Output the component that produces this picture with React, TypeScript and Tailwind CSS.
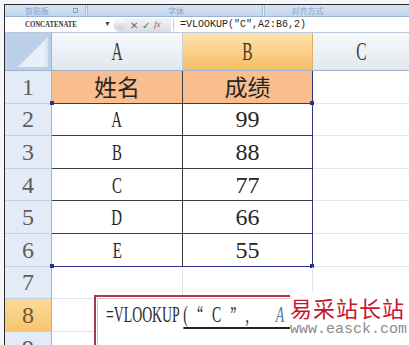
import React from "react";

const serif = "font-['Liberation_Serif',serif]";

// SimSun-style half width latin letters
function Narrow({ children, scale = "scale-x-[0.62]" }: { children: React.ReactNode; scale?: string }) {
  return <span className={`inline-block ${scale}`}>{children}</span>;
}

type Row = { n: number; a?: string; b?: string; head?: boolean; latin?: boolean };

const rows: Row[] = [
  { n: 1, a: "姓名", b: "成绩", head: true },
  { n: 2, a: "A", b: "99", latin: true },
  { n: 3, a: "B", b: "88", latin: true },
  { n: 4, a: "C", b: "77", latin: true },
  { n: 5, a: "D", b: "66", latin: true },
  { n: 6, a: "E", b: "55", latin: true },
  { n: 7 },
  { n: 8 },
  { n: 9 },
];

function Dot({ side }: { side: "left" | "right" }) {
  return (
    <span
      className={`absolute bottom-[-2px] h-[4px] w-[4px] bg-[#2b2f8f] ${side === "left" ? "left-[-2px]" : "right-[-2px]"}`}
    />
  );
}

function SheetRow({ row }: { row: Row }) {
  const inRange = row.n <= 6;
  const bottom =
    row.n === 1 || row.n === 6
      ? "border-b-[#2f3391]"
      : inRange
      ? "border-b-[#3c3c3c]"
      : "border-b-[#dfe3ea]";
  const active = row.n === 8;
  return (
    <div className="flex h-[32.6px] shrink-0">
      <div
        className={`flex w-[47px] shrink-0 items-center justify-center border-b border-r border-b-[#c3d0e0] border-r-[#9fb3cc] font-['Liberation_Serif',serif] text-[24px] text-[#5d5d5d] ${
          active ? "bg-gradient-to-b from-[#fcd99a] to-[#f7c46c] text-[#6a5a3a]" : "bg-[#e3ebf6]"
        }`}
      >
        {row.n}
      </div>
      <div
        className={`relative flex w-[131px] shrink-0 items-center justify-center border-b border-r font-['Liberation_Serif',serif] text-[24px] text-[#262626] ${bottom} ${
          inRange ? "border-r-[#3c3c3c]" : "border-r-[#dfe3ea]"
        } ${row.head ? "bg-[#f9bd8e]" : ""}`}
      >
        {row.head ? (
          <span className="font-['Noto_Sans_CJK_SC',sans-serif] text-[23px] leading-none">{row.a}</span>
        ) : row.latin ? (
          <Narrow>{row.a}</Narrow>
        ) : null}
        {(row.n === 1 || row.n === 6) && <Dot side="left" />}
      </div>
      <div
        className={`relative flex w-[130px] shrink-0 items-center justify-center border-b border-r font-['Liberation_Serif',serif] text-[24px] text-[#262626] ${bottom} ${
          inRange ? "border-r-[#34367a]" : "border-r-[#dfe3ea]"
        } ${row.head ? "bg-[#f9bd8e]" : ""}`}
      >
        {row.head ? (
          <span className="font-['Noto_Sans_CJK_SC',sans-serif] text-[23px] leading-none">{row.b}</span>
        ) : (
          row.b
        )}
        {(row.n === 1 || row.n === 6) && <Dot side="right" />}
      </div>
      <div className="flex-1 border-b border-b-[#e3e7ee]" />
    </div>
  );
}

export default function App() {
  return (
    <div className="relative h-[345px] w-[409px] overflow-hidden bg-[#f4f6f9] pl-[4px] pt-[4px]">
      <div className="flex h-full flex-col border-l border-t border-[#2a2a2a] bg-white">
        {/* ribbon group labels */}
        <div className="flex h-[12px] shrink-0 items-center border-b border-[#9db3cf] bg-gradient-to-b from-[#d6e3f3] to-[#c3d6ee] font-['Noto_Sans_CJK_SC',sans-serif] text-[8px] leading-none text-[#5b7bb0]">
          <div className="flex w-[77px] items-center justify-between pl-[20px] pr-[4px]">
            <span className="opacity-60">剪贴板</span>
            <span className="h-[5px] w-[5px] border border-[#8aa2c4]" />
          </div>
          <div className="mx-[3px] h-full w-[3px] border-x border-[#a9bdd6] bg-[#e4ecf7]" />
          <div className="flex w-[170px] justify-center">
            <span className="opacity-60">字体</span>
          </div>
          <div className="mx-[1px] h-full w-[3px] border-x border-[#a9bdd6] bg-[#e4ecf7]" />
          <div className="flex flex-1 justify-center pr-[60px]">
            <span className="opacity-60">对齐方式</span>
          </div>
        </div>

        {/* formula bar */}
        <div className="flex h-[16px] shrink-0 items-center border-b border-[#b7c7dc] bg-white">
          <div className="flex w-[108px] items-center pl-[20px]">
            <span className={`inline-block origin-left scale-x-[0.85] ${serif} text-[8px] font-bold text-[#333]`}>
              CONCATENATE
            </span>
            <span className="ml-auto mr-[2px] text-[7px] text-[#444]">▼</span>
          </div>
          <div className="flex h-[14px] w-[58px] items-center gap-[4px] rounded-l-full bg-gradient-to-b from-[#f1f3f6] to-[#d9dee6] pl-[2px] text-[10px] leading-none">
            <span className="h-[11px] w-[11px] rounded-full bg-gradient-to-b from-[#ffffff] to-[#c9d0da]" />
            <span className="text-[#5a6a80]">✕</span>
            <span className="text-[#3f7a3f]">✓</span>
            <span className={`${serif} text-[9px] italic text-[#7a6a50]`}>fx</span>
          </div>
          <div className="ml-[2px] h-[12px] w-px bg-[#c3ccd8]" />
          <span className="ml-[6px] font-['Liberation_Mono',monospace] text-[10px] text-[#1e1e1e]">
            =VLOOKUP("C",A2:B6,2)
          </span>
        </div>

        {/* column headers */}
        <div className="flex h-[38px] shrink-0 border-b border-[#9fb3cc]">
          <div className="w-[47px] shrink-0 border-r border-[#9fb3cc] bg-[#c4d6ed]">
            <svg width="46" height="37" viewBox="0 0 46 37">
              <rect width="46" height="37" fill="#bcd0ea" />
              <polygon points="43,4 43,34 13,34" fill="#e9eff8" />
              <polygon points="43,4 43,34 40,34 40,8" fill="#dbe5f2" />
            </svg>
          </div>
          <div
            className={`flex w-[131px] shrink-0 items-center justify-center border-r border-[#c7d1de] bg-gradient-to-b from-[#f7f9fb] to-[#e2e8f0] text-[25px] text-[#3a3a3a] ${serif}`}
          >
            <Narrow>A</Narrow>
          </div>
          <div
            className={`flex w-[130px] shrink-0 items-center justify-center border-r border-[#e0b060] bg-gradient-to-b from-[#fde3ae] to-[#f6bd62] text-[25px] text-[#4a3a20] ${serif}`}
          >
            <Narrow>B</Narrow>
          </div>
          <div
            className={`flex flex-1 items-center justify-center bg-gradient-to-b from-[#f7f9fb] to-[#e2e8f0] text-[25px] text-[#3a3a3a] ${serif}`}
          >
            <Narrow>C</Narrow>
          </div>
        </div>

        {rows.map((r) => (
          <SheetRow key={r.n} row={r} />
        ))}
      </div>

      {/* formula being typed in cell */}
      <div className="absolute left-[94px] top-[295px] h-[60px] w-[220px] border-2 border-[#a63a4c] bg-white p-px">
        <div className="h-full border border-[#e7b8c0] pl-[8px] pt-[4px]">
          <span className="inline-block origin-left scale-x-[0.6] whitespace-nowrap font-['Liberation_Serif',serif] text-[23px] leading-none text-[#2a2a2a]">
            =VLOOKUP
            <span className="ml-[6px] border-b-2 border-[#222] pr-[40px] tracking-[15px]">
              (“C”,
              <span className="ml-[30px] italic text-[#5470a0]">A</span>2:B6,2)
            </span>
          </span>
        </div>
      </div>

      {/* watermark */}
      <div className="absolute left-[290px] top-[292px] flex h-[60px] w-[125px] flex-col bg-white">
        <span className="mt-[2px] whitespace-nowrap font-['Noto_Sans_CJK_SC',serif] text-[22px] leading-[26px] tracking-[1px] text-[#c8142f]">
          易采站长站
        </span>
        <span className="mt-[2px] whitespace-nowrap font-['Liberation_Mono',monospace] text-[15px] leading-none text-[#8c8c8c]">
          www.easck.com
        </span>
      </div>
    </div>
  );
}
